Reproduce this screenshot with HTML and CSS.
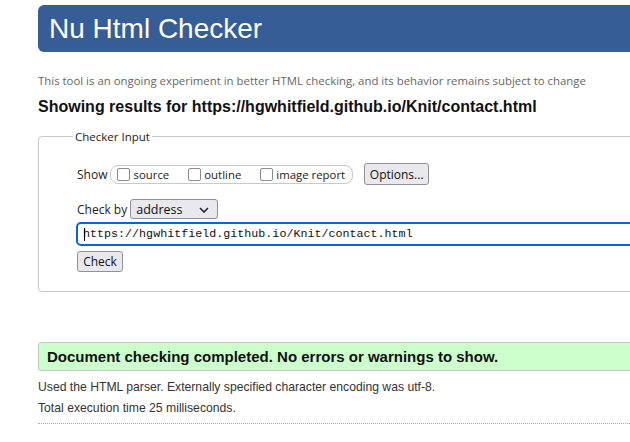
FILE: index.html
```html
<!DOCTYPE html>
<html>
<head>
<meta charset="utf-8">
<link rel="stylesheet" href="styles.css">
</head>
<body>
<div class="page">
  <h1 class="banner">Nu Html Checker</h1>
  <p class="tagline">This tool is an ongoing experiment in better HTML checking, and its behavior remains subject to change</p>
  <h2 class="results-title">Showing results for https://hgwhitfield.github.io/Knit/contact.html</h2>

  <fieldset class="checker">
    <legend class="legend">Checker Input</legend>
    <div class="row show-row">
      <span class="label">Show</span>
      <span class="pill">
        <span class="opt"><span class="box"></span>source</span>
        <span class="opt"><span class="box"></span>outline</span>
        <span class="opt"><span class="box"></span>image report</span>
      </span>
      <span class="btn options-btn">Options...</span>
    </div>
    <div class="row checkby-row">
      <span class="label">Check by</span>
      <span class="select">address
        <svg class="chev" width="10" height="6" viewBox="0 0 10 6"><path d="M1 1 L5 5 L9 1" fill="none" stroke="#222" stroke-width="1.6"/></svg>
      </span>
    </div>
    <div class="url-input"><span class="caret"></span>https://hgwhitfield.github.io/Knit/contact.html</div>
    <div class="row"><span class="btn check-btn">Check</span></div>
  </fieldset>

  <div class="success">Document checking completed. No errors or warnings to show.</div>
  <p class="info">Used the HTML parser. Externally specified character encoding was utf-8.</p>
  <p class="info">Total execution time 25 milliseconds.</p>
  <div class="dotted"></div>
</div>
</body>
</html>
```

FILE: styles.css
```css
html, body {
  margin: 0;
  padding: 0;
  background: #fff;
  overflow: hidden;
}
.page {
  width: 720px;
  padding-left: 38px;
  font-family: "Liberation Sans", Arial, sans-serif;
  color: #222;
}
.banner {
  margin: 5px 0 0 0;
  height: 47px;
  line-height: 47px;
  background: #365d95;
  color: #fff;
  border-radius: 6px;
  padding-left: 11px;
  font-size: 28px;
  font-weight: normal;
}
.tagline {
  margin: 21px 0 0 0;
  font-family: "Open Sans", "Noto Sans", sans-serif;
  font-size: 11.4px;
  line-height: 16px;
  color: #666;
}
.results-title {
  margin: 8px 0 0 0;
  font-size: 16px;
  line-height: 20px;
  font-weight: bold;
  color: #111;
}
.checker {
  margin: 12px 0 0 0;
  border: 1px solid #c8c8c8;
  border-radius: 4px;
  padding: 7px 0 19px 38px;
  min-width: 0;
}
.legend {
  margin-left: -4px;
  padding: 0 2px;
  font-family: "Open Sans", "Noto Sans", sans-serif;
  font-size: 11.5px;
  color: #222;
}
.row {
  display: flex;
  align-items: center;
}
.label {
  font-family: "Open Sans", "Noto Sans", sans-serif;
  font-size: 12px;
  color: #222;
  white-space: nowrap;
}
.show-row {
  margin-top: 12px;
  height: 22px;
}
.pill {
  display: flex;
  align-items: center;
  flex-shrink: 0;
  margin-left: 3px;
  height: 17px;
  border: 1px solid #c8c8c8;
  border-radius: 8px;
  padding: 0 7px 0 6px;
}
.opt {
  display: flex;
  align-items: center;
  white-space: nowrap;
  font-family: "Open Sans", "Noto Sans", sans-serif;
  font-size: 11.4px;
  color: #222;
  margin-right: 19px;
}
.opt:last-child { margin-right: 0; }
.box {
  width: 11px;
  height: 11px;
  border: 1.5px solid #8a8a96;
  border-radius: 2px;
  margin-right: 3px;
  background: #fff;
}
.btn {
  display: inline-flex;
  align-items: center;
  justify-content: center;
  background: #e9e9ed;
  border: 1px solid #8f8f9d;
  border-radius: 3px;
  font-family: "Open Sans", "Noto Sans", sans-serif;
  font-size: 12px;
  color: #111;
  box-sizing: border-box;
  white-space: nowrap;
  flex-shrink: 0;
}
.options-btn {
  margin-left: 11px;
  width: 65px;
  height: 22px;
}
.checkby-row {
  margin-top: 14px;
}
.select {
  position: relative;
  display: inline-flex;
  align-items: center;
  margin-left: 3px;
  width: 88px;
  height: 20px;
  box-sizing: border-box;
  border: 1px solid #8f8f9d;
  border-radius: 3px;
  background: #e9e9ed;
  padding-left: 5px;
  font-family: "Open Sans", "Noto Sans", sans-serif;
  font-size: 12.5px;
  color: #111;
}
.chev {
  position: absolute;
  right: 8px;
  top: 7px;
}
.url-input {
  margin-top: 3px;
  margin-left: -1px;
  height: 24px;
  box-sizing: border-box;
  border: 2px solid #0b63d6;
  border-radius: 5px;
  padding-left: 5px;
  display: flex;
  align-items: center;
  font-family: "Liberation Mono", "DejaVu Sans Mono", monospace;
  font-size: 11.7px;
  color: #111;
  position: relative;
}
.caret {
  position: absolute;
  left: 6px;
  top: 4px;
  width: 1px;
  height: 13px;
  background: #000;
}
.check-btn {
  margin-top: 5px;
  width: 46px;
  height: 21px;
}
.success {
  margin-top: 50px;
  height: 29px;
  box-sizing: border-box;
  border: 1px solid #c4c4c4;
  border-radius: 3px;
  background: #ccffcc;
  padding-left: 8px;
  display: flex;
  align-items: center;
  font-size: 15px;
  font-weight: bold;
  color: #111;
}
.info {
  margin: 0;
  font-size: 12.2px;
  line-height: 21px;
  color: #333;
}
.success + .info {
  margin-top: 6px;
}
.dotted {
  margin-top: 4px;
  border-top: 1px dotted #aaa;
}
```
